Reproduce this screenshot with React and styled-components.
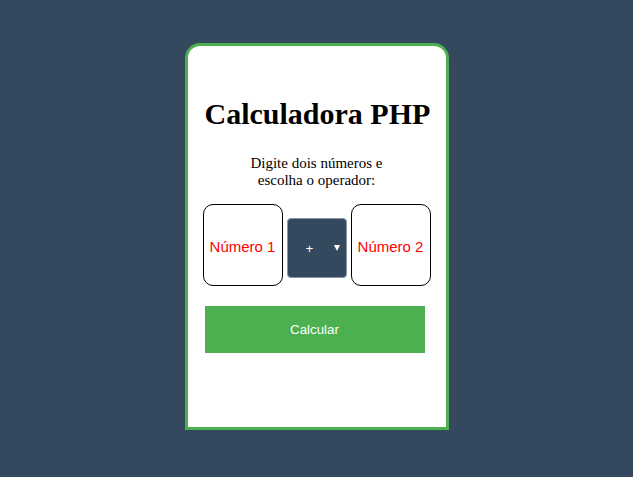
import React from "react";
import styled, { createGlobalStyle } from "styled-components";

const GlobalStyle = createGlobalStyle`
  html, body {
    margin: 0;
    padding: 0;
    background: #34495e;
  }
  body {
    font-family: "Liberation Serif", "Times New Roman", serif;
  }
`;

const Page = styled.div`
  display: flex;
  justify-content: center;
  padding-top: 43px;
  height: 477px;
  box-sizing: border-box;
`;

const Card = styled.form`
  width: 264px;
  height: 387px;
  box-sizing: border-box;
  background: #fff;
  border: 3px solid #4caf50;
  border-radius: 15px 15px 0 0;
  padding: 0 17px;
  display: flex;
  flex-direction: column;
`;

const Title = styled.h1`
  margin: 49px 0 0;
  font-size: 30px;
  line-height: 37px;
  font-weight: bold;
  text-align: center;
  color: #000;
  white-space: nowrap;
`;

const Hint = styled.p`
  margin: 23px auto 0;
  width: 150px;
  font-size: 15px;
  line-height: 17px;
  text-align: center;
  color: #000;
`;

const Row = styled.div`
  align-self: center;
  display: flex;
  align-items: flex-start;
  gap: 4px;
  margin-top: 15px;
`;

const NumberInput = styled.input`
  width: 80px;
  height: 82px;
  box-sizing: border-box;
  border: 1px solid #000;
  border-radius: 10px;
  background: #fff;
  padding: 2px 0 0;
  font-family: "Liberation Sans", Arial, sans-serif;
  font-size: 15px;
  text-align: center;
  color: #f00;
  outline: none;

  &::placeholder {
    color: #f00;
    opacity: 1;
  }
`;

const SelectWrap = styled.div`
  position: relative;
  width: 60px;
  height: 60px;
  margin-top: 14px;
`;

const Operator = styled.select`
  appearance: none;
  width: 60px;
  height: 60px;
  box-sizing: border-box;
  border: 1px solid #8a96a3;
  border-radius: 4px;
  background: #34495e;
  color: #fff;
  font-family: "Liberation Sans", Arial, sans-serif;
  font-size: 13.33px;
  padding: 0 0 0 18px;
  outline: none;
`;

const Arrow = styled.span`
  position: absolute;
  right: 7px;
  top: 27px;
  width: 0;
  height: 0;
  border-left: 3.5px solid transparent;
  border-right: 3.5px solid transparent;
  border-top: 6px solid #fff;
  pointer-events: none;
`;

const SubmitButton = styled.button`
  margin-top: 20px;
  width: 220px;
  height: 47px;
  border: none;
  background: #4caf50;
  color: #fff;
  font-family: "Liberation Sans", Arial, sans-serif;
  font-size: 13.33px;
  cursor: pointer;
`;

export default function App() {
  return (
    <Page>
      <GlobalStyle />
      <Card onSubmit={(e) => e.preventDefault()}>
        <Title>Calculadora PHP</Title>
        <Hint>Digite dois números e escolha o operador:</Hint>
        <Row>
          <NumberInput type="text" placeholder="Número 1" />
          <SelectWrap>
            <Operator defaultValue="+">
              <option value="+">+</option>
              <option value="-">-</option>
              <option value="*">*</option>
              <option value="/">/</option>
            </Operator>
            <Arrow />
          </SelectWrap>
          <NumberInput type="text" placeholder="Número 2" />
        </Row>
        <SubmitButton type="submit">Calcular</SubmitButton>
      </Card>
    </Page>
  );
}
